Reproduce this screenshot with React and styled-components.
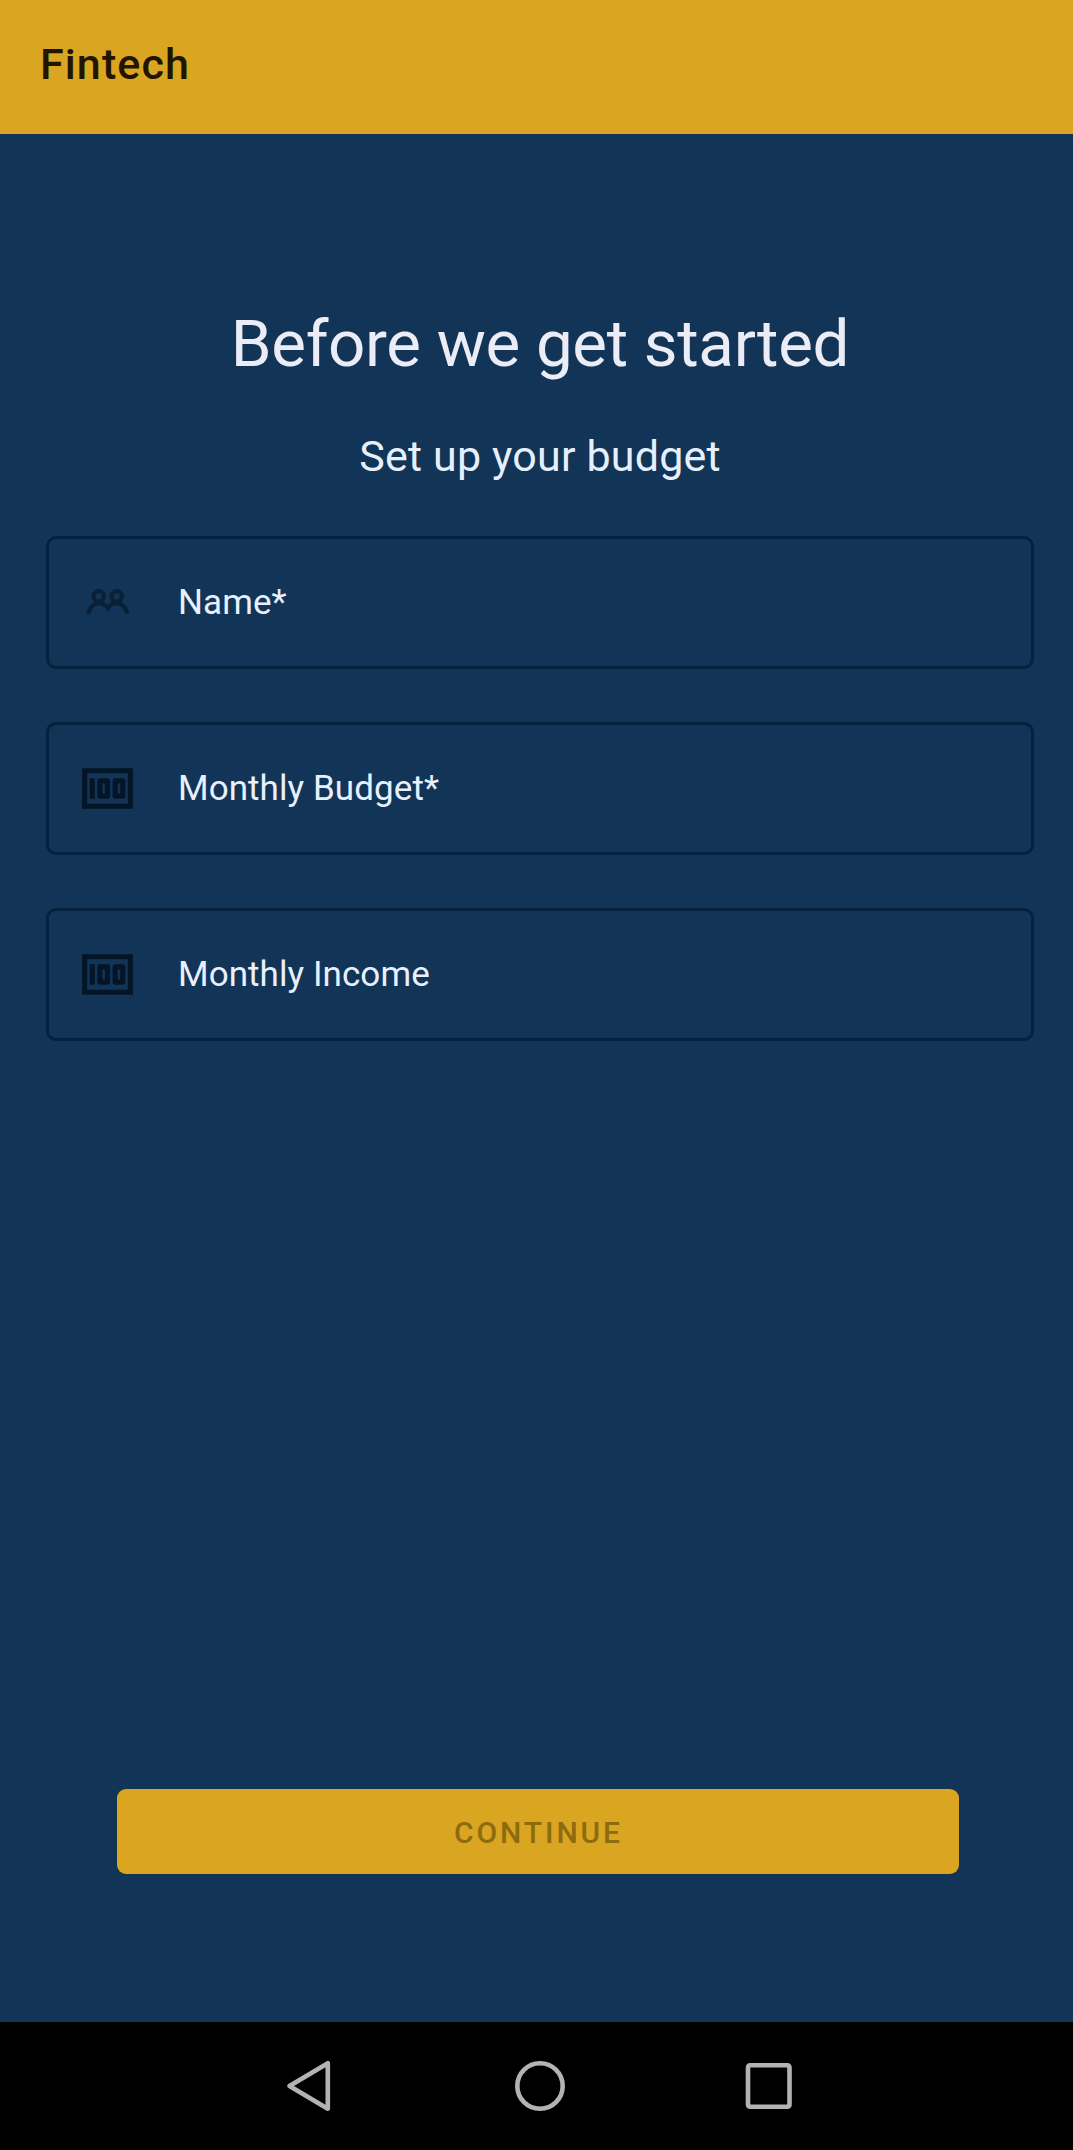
import React from "react";
import styled, { createGlobalStyle } from "styled-components";
import { MdMoney } from "react-icons/md";

const GlobalStyle = createGlobalStyle`
  * { box-sizing: border-box; }
  body { margin: 0; background: #123456; font-family: Roboto, "Noto Sans", sans-serif; }
`;

const Screen = styled.div`
  width: 100%;
  height: 2150px;
  display: flex;
  flex-direction: column;
  background: #123456;
`;

const AppBar = styled.header`
  height: 134px;
  flex: none;
  padding: 39px 0 0 40px;
  background: #daa520;
`;

const AppTitle = styled.div`
  font-size: 43px;
  line-height: 50px;
  font-weight: 500;
  letter-spacing: 1.1px;
  color: #221400;
`;

const Content = styled.main`
  flex: 1;
  display: flex;
  flex-direction: column;
  padding: 171px 39px 0 46px;
`;

const Heading = styled.h1`
  margin: 0;
  text-align: center;
  font-size: 65.5px;
  line-height: 77px;
  font-weight: 400;
  letter-spacing: -0.33px;
  color: #ececf6;
`;

const Subheading = styled.h2`
  margin: 49px 0 0;
  text-align: center;
  font-size: 43px;
  line-height: 50px;
  font-weight: 400;
  letter-spacing: 0.18px;
  color: #e6effc;
`;

const Fields = styled.form`
  display: flex;
  flex-direction: column;
  gap: 53px;
  margin-top: 55px;
`;

const Field = styled.label`
  height: 133px;
  display: flex;
  align-items: center;
  padding-left: 28px;
  border: 3px solid #04213e;
  border-radius: 10px;
`;

const IconSlot = styled.span`
  width: 62px;
  height: 62px;
  display: flex;
  align-items: center;
  color: #031526;
`;

const FieldLabel = styled.span`
  margin-left: 39px;
  font-size: 35px;
  line-height: 42px;
  letter-spacing: 0.08px;
  color: #e9f0fd;
`;

const ContinueButton = styled.button`
  height: 85px;
  width: 842px;
  margin: auto 0 148px 71px;
  padding: 1px 0 0 1px;
  border: 0;
  border-radius: 9px;
  background: #daa520;
  color: #8d6b0e;
  font-family: inherit;
  font-size: 30px;
  font-weight: 500;
  letter-spacing: 2.9px;
`;

const NavBar = styled.nav`
  height: 128px;
  flex: none;
  display: flex;
  align-items: center;
  padding-left: 278px;
  gap: 169px;
  background: #000;
`;

const NavIcon = styled.svg`
  width: 60px;
  height: 60px;
  fill: none;
  stroke: #b3b3b3;
  stroke-width: 4.6;
  stroke-linejoin: round;
`;

function PeopleIcon() {
  return (
    <svg width="62" height="62" viewBox="0 0 62 62" fill="none" stroke="#0a2036" strokeWidth="4.2">
      <circle cx="21.7" cy="24.3" r="5.2" />
      <circle cx="39.7" cy="24.3" r="5.2" />
      <path d="M11.3 41.5 C12.5 35.5 17 31.2 21.7 31.2 C25.5 31.2 28.5 33.2 30.7 36.2 C33 33.2 36 31.2 39.7 31.2 C44.4 31.2 49 35.5 50.3 41.5" />
    </svg>
  );
}

const fields = [
  { label: "Name*", icon: <PeopleIcon /> },
  { label: "Monthly Budget*", icon: <MdMoney size={61} /> },
  { label: "Monthly Income", icon: <MdMoney size={61} /> },
];

export default function App() {
  return (
    <>
      <GlobalStyle />
      <Screen>
        <AppBar>
          <AppTitle>Fintech</AppTitle>
        </AppBar>
        <Content>
          <Heading>Before we get started</Heading>
          <Subheading>Set up your budget</Subheading>
          <Fields>
            {fields.map(({ label, icon }) => (
              <Field key={label}>
                <IconSlot>{icon}</IconSlot>
                <FieldLabel>{label}</FieldLabel>
              </Field>
            ))}
          </Fields>
          <ContinueButton type="button">CONTINUE</ContinueButton>
        </Content>
        <NavBar>
          <NavIcon viewBox="0 0 60 60">
            <path d="M49.8 7.2 V52.8 L11.5 30 Z" />
          </NavIcon>
          <NavIcon viewBox="0 0 60 60">
            <circle cx="33" cy="30" r="22.7" />
          </NavIcon>
          <NavIcon viewBox="0 0 60 60">
            <rect x="12" y="9.3" width="41.5" height="41.5" rx="2" />
          </NavIcon>
        </NavBar>
      </Screen>
    </>
  );
}
